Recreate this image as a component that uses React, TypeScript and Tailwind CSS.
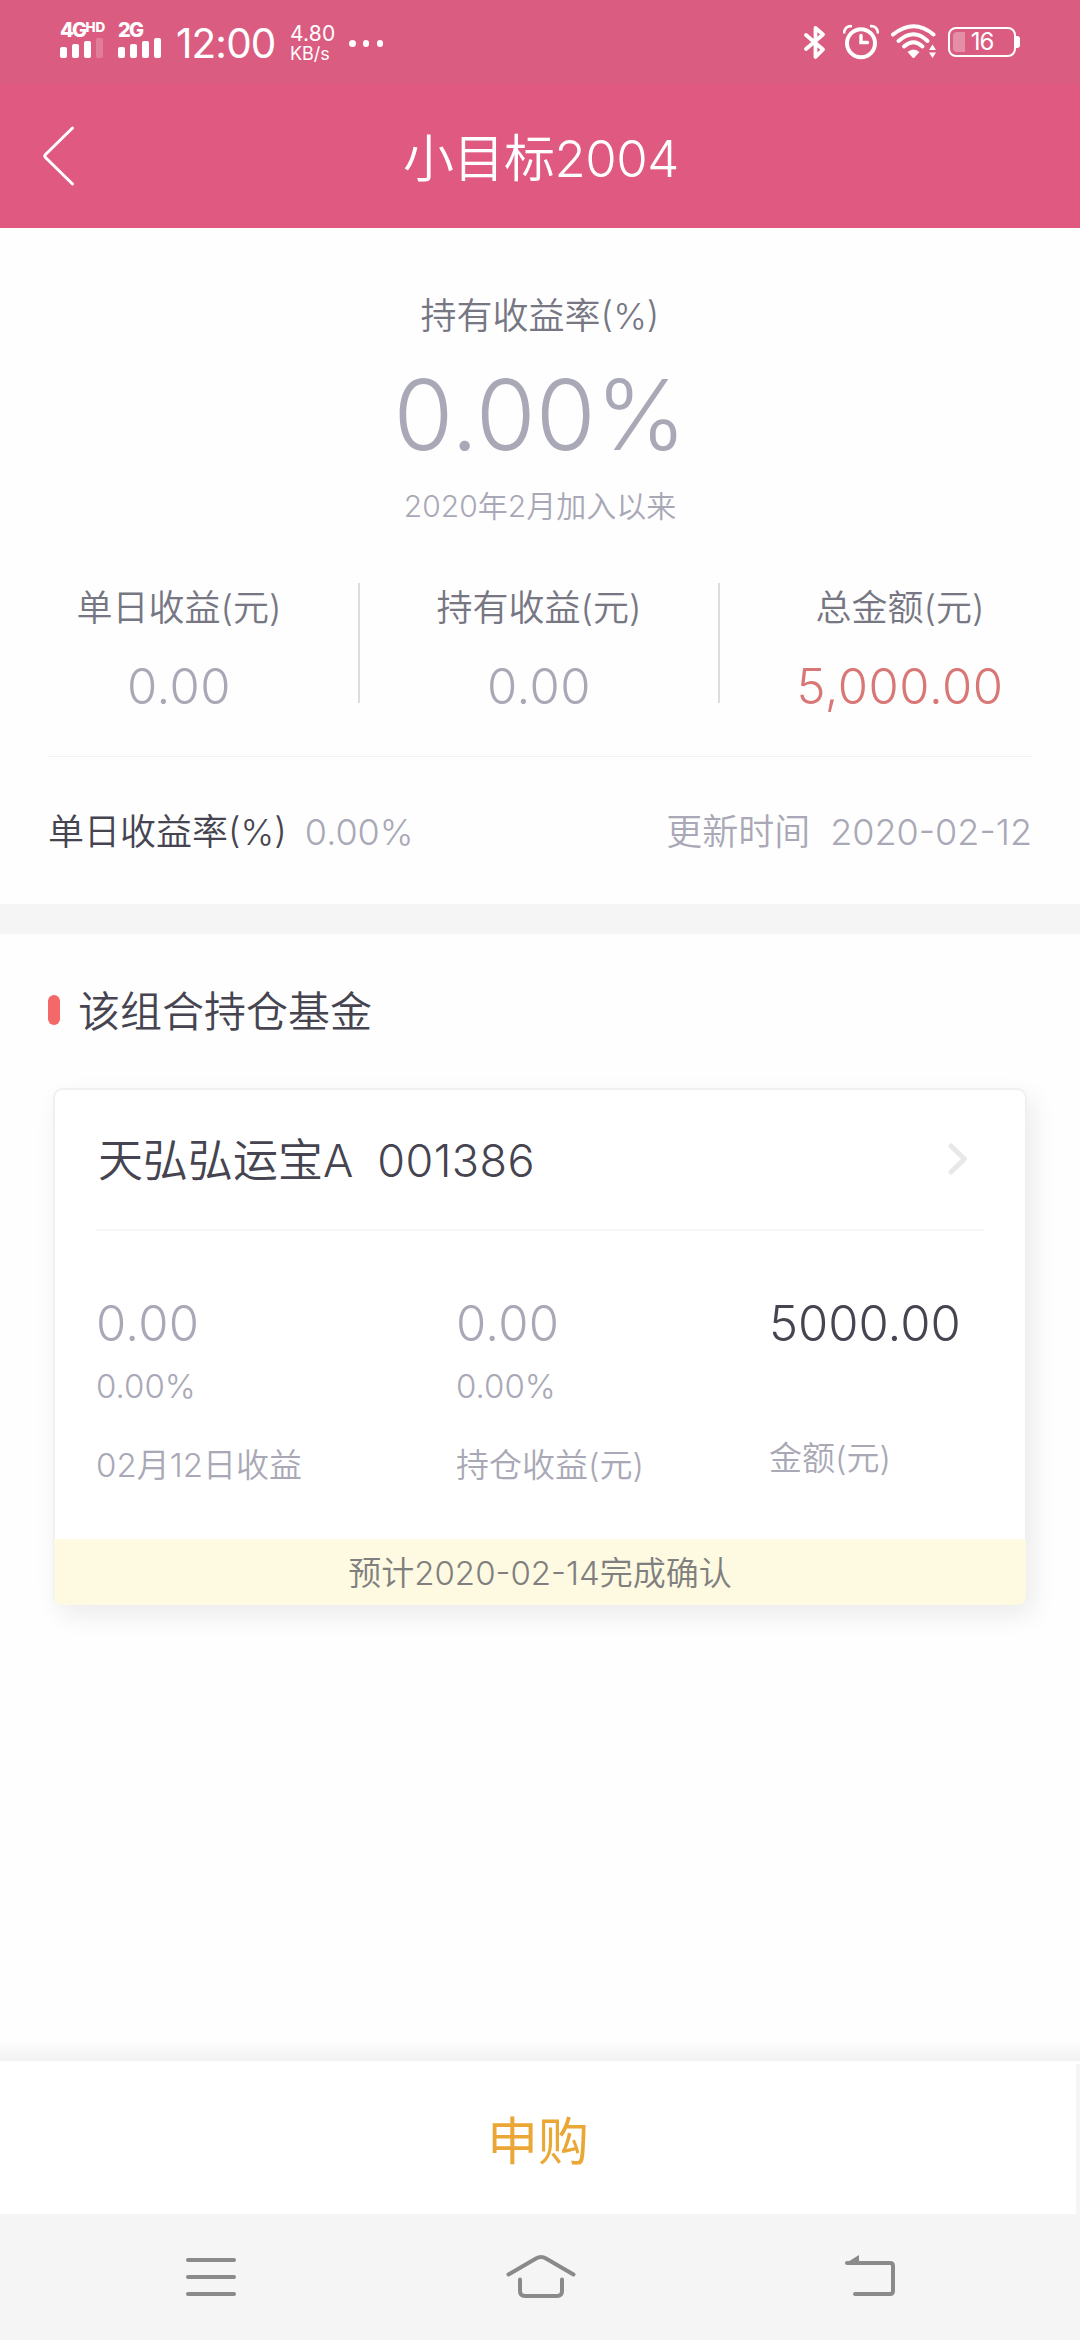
import React from "react";

const stats = [
  { label: "单日收益(元)", value: "0.00", color: "text-[#a9a8b6]" },
  { label: "持有收益(元)", value: "0.00", color: "text-[#a9a8b6]" },
  { label: "总金额(元)", value: "5,000.00", color: "text-[#d97676]" },
];

function SignalBars({ weakLast = false }: { weakLast?: boolean }) {
  return (
    <div className="flex h-5 w-[43px] items-end justify-between">
      <i className="h-[11px] w-[6.5px] rounded-[2px] bg-white" />
      <i className="h-[14px] w-[6.5px] rounded-[2px] bg-white" />
      <i className="h-[17px] w-[6.5px] rounded-[2px] bg-white" />
      <i className={weakLast ? "h-5 w-[6.5px] rounded-[2px] bg-white/20" : "h-5 w-[6.5px] rounded-[2px] bg-white"} />
    </div>
  );
}

function StatusBar() {
  return (
    <div className="flex h-[84px] items-start bg-[#da5d81] pl-[60px] text-white">
      <div className="mt-[22px] h-9 w-[46px]">
        <div className="flex h-4 items-start whitespace-nowrap font-extrabold">
          <span className="text-[20px] leading-4 tracking-[-1.7px]">4G</span>
          <span className="text-[13.5px] leading-[10px]">HD</span>
        </div>
        <SignalBars weakLast />
      </div>
      <div className="ml-[12px] mt-[22px] h-9 w-[43px]">
        <div className="h-4 text-[20px] font-extrabold leading-4 tracking-[-1.7px]">2G</div>
        <SignalBars />
      </div>
      <div className="ml-[15px] mt-[24px] w-[110px] whitespace-nowrap text-[40.5px] leading-10 tracking-[-0.9px]">12:00</div>
      <div className="ml-[4px] mt-[24px] w-[56px]">
        <div className="text-[21px] leading-[20px] tracking-[0.2px]">4.80</div>
        <div className="text-[18px] leading-[19px]">KB/s</div>
      </div>
      <div className="ml-[3px] mt-10 flex w-[34px] justify-between">
        <i className="size-[6.5px] rounded-full bg-white" />
        <i className="size-[6.5px] rounded-full bg-white" />
        <i className="size-[6.5px] rounded-full bg-white" />
      </div>
      <svg className="ml-auto mt-6 h-9 w-6" viewBox="0 0 24 36" fill="none" stroke="white" strokeWidth="3.8" strokeLinejoin="round" strokeLinecap="round">
        <path d="M3 11 L20 25.5 L12.5 33 V4 L20 10.5 L3 25" />
      </svg>
      <svg className="ml-4 mt-6 h-9 w-9" viewBox="0 0 36 36" fill="none" stroke="white">
        <circle cx="18" cy="19.3" r="14" strokeWidth="4" />
        <path d="M18 11.5 V18.5 H24.5" strokeWidth="3.4" strokeLinecap="round" />
        <path d="M1 9.5 C1.5 4 4.5 1.5 9 2.2 M35 9.5 C34.5 4 31.5 1.5 27 2.2" strokeWidth="2.6" />
      </svg>
      <svg className="ml-[11px] mt-6 h-9 w-[50px]" viewBox="0 0 50 36" fill="none" stroke="white" strokeWidth="4" strokeLinecap="round">
        <path d="M3 10.5 Q24 -6 43.500 10.500" />
        <path d="M8.500 17 Q24 3.500 37.500 17" />
        <path d="M14 22.500 Q23.500 14 32.500 22.500" />
        <path d="M17.500 28 Q23.500 23 29.500 28 L24.500 33.500 Q23.500 34.500 22.500 33.500 Z" fill="white" stroke="none" />
        <path d="M39 26 L42.500 20.500 L46 26 Z M39 28.500 L42.500 34 L46 28.500 Z" fill="white" stroke="none" />
      </svg>
      <div className="ml-[8px] mr-[60px] mt-[27px] flex items-center">
        <div className="relative flex h-[30px] w-[68px] items-center justify-center rounded-[8px] border-2 border-white text-[24px] leading-none">
          <i className="absolute left-[3px] top-[3px] h-5 w-[12px] rounded-l-[4px] bg-white/30" />
          <span className="relative tracking-[-1px]">16</span>
        </div>
        <i className="h-3 w-[4px] rounded-r-[3px] bg-white" />
      </div>
    </div>
  );
}

function Header() {
  return (
    <div className="flex h-[144px] items-center bg-[#df5980] pl-[40px] pr-[74px] text-white">
      <svg className="h-[64px] w-[36px]" viewBox="0 0 36 64" fill="none" stroke="white" strokeWidth="3" strokeLinecap="round" strokeLinejoin="round">
        <path d="M32.500 4 L5.500 30.500 Q4 32 5.500 33.500 L32.500 60" />
      </svg>
      <h1 className="flex-1 pt-[5px] text-center text-[51px] font-[350] leading-[60px] tracking-[-0.5px]">小目标2004</h1>
    </div>
  );
}

function Summary() {
  return (
    <section className="px-12 pt-[68px] font-[350]">
      <div className="text-center text-[36px] leading-10 text-[#777683]">持有收益率(%)</div>
      <div className="mt-[29px] text-center text-[97px] font-light leading-[100px] text-[#a9a8b6]">0.00%</div>
      <div className="mt-[21px] text-center text-[30px] leading-10 text-[#a9a8b6]">2020年2月加入以来</div>
      <div className="-mx-12 mt-[57px] grid h-[120px] grid-cols-3 divide-x-2 divide-[#dddddd]">
        {stats.map((s) => (
          <div key={s.label} className="text-center">
            <div className="pt-px text-[36px] leading-[48px] text-[#777683]">{s.label}</div>
            <div className={`mt-[38px] text-[49px] font-light leading-[33px] tracking-[0.5px] ${s.color}`}>{s.value}</div>
          </div>
        ))}
      </div>
      <div className="mt-[53px] h-px bg-[#f1f1f1]" />
      <div className="flex h-[147px] items-center justify-between text-[36px] leading-10 text-[#a9a8b6]">
        <div className="flex gap-[18px] pt-[3px]">
          <span className="text-[#454450]">单日收益率(%)</span>
          <span className="font-light">0.00%</span>
        </div>
        <div className="flex gap-[20px] pt-[3px]">
          <span>更新时间</span>
          <span className="font-light">2020-02-12</span>
        </div>
      </div>
    </section>
  );
}

function FundCard() {
  return (
    <article className="mx-[53px] mt-[46px] h-[517px] rounded-[10px] border-2 border-b-0 border-[#f0f0f0] bg-white font-[350] shadow-[6px_10px_26px_rgba(0,0,0,0.08)]">
      <div className="mx-[41px] flex h-[141px] items-center justify-between border-b-2 border-[#f5f5f5] pt-[2px] text-[45px] leading-[60px] text-[#454450]">
        <div className="flex gap-[24px] pl-[2px]">
          <span>天弘弘运宝A</span>
          <span className="font-light tracking-[0.4px]">001386</span>
        </div>
        <svg className="mb-1 mr-[16px] h-8 w-5" viewBox="0 0 20 32" fill="none" stroke="#e8e8e8" strokeWidth="5" strokeLinecap="round" strokeLinejoin="round">
          <path d="M3 3 L16.500 16 L3 29" />
        </svg>
      </div>
      <div className="flex h-[308px] pl-[41px] pt-[65px] text-[#a9a8b6]">
        <div className="w-[360px]">
          <div className="text-[49px] font-light leading-[56px] tracking-[0.3px]">0.00</div>
          <div className="mt-[14px] text-[33px] font-light leading-10">0.00%</div>
          <div className="mt-[39px] text-[33px] leading-10">02月12日收益</div>
        </div>
        <div className="w-[313px]">
          <div className="text-[49px] font-light leading-[56px] tracking-[0.3px]">0.00</div>
          <div className="mt-[14px] text-[33px] font-light leading-10">0.00%</div>
          <div className="mt-[39px] text-[33px] leading-10">持仓收益(元)</div>
        </div>
        <div>
          <div className="text-[49px] font-light leading-[56px] text-[#454450]">5000.00</div>
          <div className="mt-[86px] text-[33px] leading-10">金额(元)</div>
        </div>
      </div>
      <div className="-mx-px h-[66px] rounded-b-[8px] bg-[#fef9e1] pt-[2px] text-center text-[33px] leading-[64px] text-[#7f7f7f]">
        预计2020-02-14完成确认
      </div>
    </article>
  );
}

function NavBar() {
  return (
    <nav className="flex h-[126px] items-start bg-[#f5f5f5] pt-[38px]">
      <svg className="ml-[180px] h-[50px] w-[62px]" viewBox="0 0 62 50" stroke="#8a8a8a" strokeWidth="4" strokeLinecap="round">
        <path d="M8 8 H54 M8 25 H54 M8 42 H54" />
      </svg>
      <svg className="ml-[259px] h-[50px] w-[80px]" viewBox="0 0 80 50" fill="none" stroke="#8a8a8a" strokeWidth="4" strokeLinecap="round">
        <path d="M7.500 22.500 L35 6.500 Q40 3.500 45 6.500 L72.500 22.500" />
        <path d="M19 27.500 V39 Q19 44 24 44 H56 Q61 44 61 39 V27.500" />
      </svg>
      <svg className="ml-[258px] h-[50px] w-[62px]" viewBox="0 0 62 50" fill="none" stroke="#8a8a8a" strokeWidth="4" strokeLinecap="round">
        <path d="M8 11 H51 Q54 11 54 14 V39 Q54 42 51 42 H16" />
        <path d="M5.500 12 L20 3 V12 Z" fill="#8a8a8a" stroke="none" />
      </svg>
    </nav>
  );
}

export default function App() {
  return (
    <div className='flex h-[2340px] w-[1080px] flex-col overflow-hidden bg-[#fefefe] font-["Inter","Noto_Sans_CJK_SC",sans-serif]'>
      <StatusBar />
      <Header />
      <Summary />
      <div className="h-[30px] shrink-0 bg-[#f5f5f5]" />
      <h2 className="mt-[47px] flex h-[61px] items-center pl-12 text-[42px] font-[350] leading-[60px] text-[#454450]">
        <i className="mr-[18px] mt-[-3px] h-[30px] w-3 rounded-full bg-[#f36969]" />
        该组合持仓基金
      </h2>
      <FundCard />
      <div className="mt-auto h-5 bg-linear-to-b from-[#fefefe] to-[#f2f2f2]" />
      <div className="flex h-[153px] justify-end bg-white">
        <button className="flex-1 pt-[8px] text-[51px] font-normal leading-[60px] text-[#eba735]">申购</button>
        <i className="mt-[3px] w-1 bg-[#f5f5f5]" />
      </div>
      <NavBar />
    </div>
  );
}
